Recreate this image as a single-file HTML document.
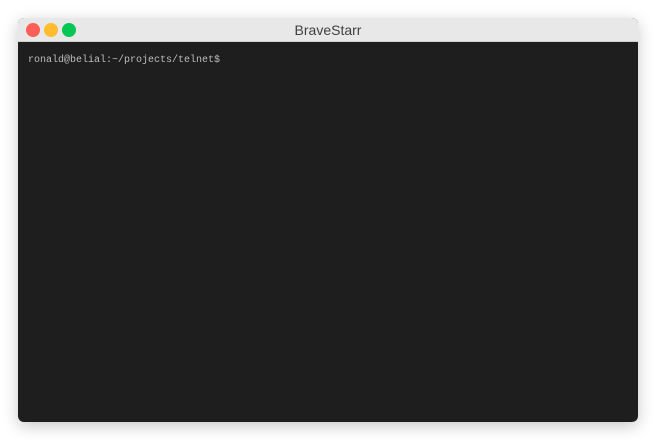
<!DOCTYPE html>
<html><head><style>
html,body{margin:0;padding:0;background:#fff;width:656px;height:440px;overflow:hidden}
.win{position:absolute;left:18px;top:18px;width:620px;height:404px;border-radius:6px;overflow:hidden;background:#1e1e1e;box-shadow:0 4px 16px rgba(0,0,0,0.22)}
.bar{height:23px;background:#e8e8e8;border-bottom:1px solid #cfcfcf;position:relative;text-align:center;font:14px "Liberation Sans",sans-serif;color:#404040;line-height:24px}
.dot{position:absolute;top:5px;width:14px;height:14px;border-radius:50%}
.t{position:absolute;left:10px;top:37px;font:10px "Liberation Mono",monospace;color:#bdbdbd;white-space:pre}
</style></head><body>
<div class="win">
<div class="bar">BraveStarr
<div class="dot" style="left:8px;background:#fe5f57"></div>
<div class="dot" style="left:26px;background:#febc2e"></div>
<div class="dot" style="left:44px;background:#06c755"></div>
</div>
<div class="t">ronald@belial:~/projects/telnet$</div>
</div>
</body></html>
